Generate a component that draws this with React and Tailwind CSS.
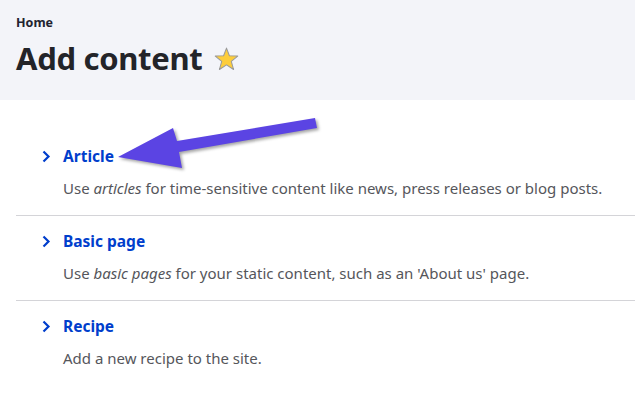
import React from "react";

const items = [
  { title: "Article", pre: "Use ", em: "articles", post: " for time-sensitive content like news, press releases or blog posts." },
  { title: "Basic page", pre: "Use ", em: "basic pages", post: " for your static content, such as an 'About us' page." },
  { title: "Recipe", pre: "Add a new recipe to the site.", em: "", post: "" },
];

function Chevron() {
  return (
    <svg width="9" height="13" viewBox="0 0 9 13" className="shrink-0">
      <path d="M1.5 1.5 L6.5 6.5 L1.5 11.5" fill="none" stroke="#003ecc" strokeWidth="2.2" />
    </svg>
  );
}

export default function App() {
  return (
    <div
      className="relative w-[635px] h-[399px] bg-white overflow-hidden"
      style={{ fontFamily: '"Noto Sans", "Open Sans", sans-serif' }}
    >
      <header className="h-[100px] bg-[#f3f4f9] px-4 pt-[14px]">
        <div className="text-[12.5px] font-bold text-[#222330] leading-[18px]">Home</div>
        <div className="flex items-center gap-[12px] mt-[6px]">
          <h1 className="text-[31px] font-bold text-[#232429] leading-[40px] tracking-[-0.3px]">Add content</h1>
          <svg width="25" height="24" viewBox="0 0 24 23" className="mt-[2px]">
            <polygon
              points="12,1 14.8,8.4 22.8,8.7 16.6,13.7 18.8,21.6 12,17.1 5.2,21.6 7.4,13.7 1.2,8.7 9.2,8.4"
              fill="#fdcd3b"
              stroke="#9a9a9a"
              strokeWidth="1"
              strokeLinejoin="round"
            />
          </svg>
        </div>
      </header>

      <ul className="ml-4 mt-[31px]">
        {items.map((it, i) => (
          <li
            key={it.title}
            className={"pt-[15px] " + (i < items.length - 1 ? "pb-[16px] border-b border-[#d4d4d8]" : "pb-[17px]")}
          >
            <div className="flex items-center h-[20px] pl-[26px] gap-[12px]">
              <Chevron />
              <span className="text-[15.5px] font-bold text-[#003ecc] leading-[20px]">{it.title}</span>
            </div>
            <p className="mt-[11px] pl-[47px] text-[15px] leading-[22px] text-[#55565b] whitespace-nowrap">
              {it.pre}
              {it.em && <em>{it.em}</em>}
              {it.post}
            </p>
          </li>
        ))}
      </ul>

      <svg
        className="absolute left-0 top-0 pointer-events-none"
        width="635"
        height="399"
        viewBox="0 0 635 399"
        style={{ filter: "drop-shadow(2px 2px 1.5px rgba(0,0,0,0.35))" }}
      >
        <polygon
          points="118,157 173,128 177,141 315,118 317,128 179,152 182,168"
          fill="#5b44e3"
        />
      </svg>
    </div>
  );
}
